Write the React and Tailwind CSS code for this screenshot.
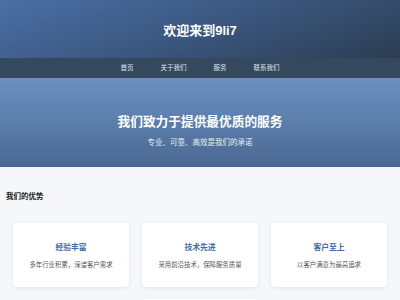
import React from 'react';

const features = [
  { title: "经验丰富", desc: "多年行业积累，深谙客户需求" },
  { title: "技术先进", desc: "采用前沿技术，保障服务质量" },
  { title: "客户至上", desc: "以客户满意为最高追求" },
];

function App() {
  return (
    <div className="h-[300px] overflow-hidden bg-[#f5f7fa] font-['Liberation_Sans','Noto_Sans_CJK_SC',sans-serif]">
      {/* Header */}
      <header className="h-[58px] flex items-center justify-center pt-[3px] bg-[linear-gradient(160deg,#4a6fa6_0%,#3b577f_50%,#2c3d52_100%)]">
        <h1 className="text-white font-bold text-[13px] leading-none">欢迎来到9li7</h1>
      </header>

      {/* Nav */}
      <nav className="h-[20px] bg-[#34495e] flex items-center justify-center gap-[27px]">
        {["首页", "关于我们", "服务", "联系我们"].map((item) => (
          <a key={item} className="text-[#dfe5eb] text-[6.5px] leading-none">
            {item}
          </a>
        ))}
      </nav>

      {/* Hero */}
      <section className="h-[89px] flex flex-col items-center pt-[38px] bg-[linear-gradient(180deg,#6b90c0_0%,#5b7eab_50%,#4a6893_100%)] border-b border-[#45618a]">
        <h2 className="text-white font-bold text-[12.7px] leading-none">我们致力于提供最优质的服务</h2>
        <p className="text-[#e8eef6] text-[7.5px] leading-none mt-[10px]">专业、可靠、高效是我们的承诺</p>
      </section>

      {/* Features */}
      <section className="px-[6px] pt-[26px]">
        <h3 className="text-[#222] font-bold text-[7.5px] leading-none">我们的优势</h3>
        <div className="flex flex-wrap justify-center gap-x-[13px] gap-y-[12px] px-[7px] mt-[22px]">
          {features.map((f) => (
            <div
              key={f.title}
              className="w-[116px] h-[64px] pt-[3px] bg-white rounded-[4px] shadow-[0_1px_4px_rgba(0,0,0,0.08)] flex flex-col items-center justify-center"
            >
              <h4 className="text-[#3e6aa8] font-bold text-[7.8px] leading-none mb-[10px]">{f.title}</h4>
              <p className="text-[#555] text-[6.4px] leading-none">{f.desc}</p>
            </div>
          ))}
          <div className="w-[116px] h-[64px] bg-white rounded-[4px] shadow-[0_1px_4px_rgba(0,0,0,0.08)]" />
        </div>
      </section>
    </div>
  );
}

export default App;
